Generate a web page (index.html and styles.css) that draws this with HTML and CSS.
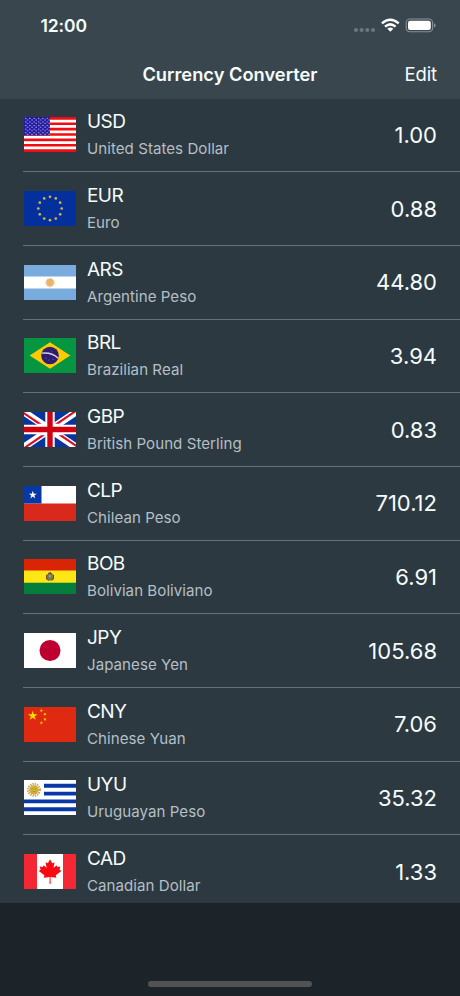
FILE: index.html
```html
<!DOCTYPE html>
<html lang="en">
<head>
<meta charset="utf-8">
<meta name="viewport" content="width=device-width">
<title>Currency Converter</title>
<link rel="stylesheet" href="styles.css">
</head>
<body>
<svg class="defs" aria-hidden="true">
  <defs>
    <polygon id="star" points="0,-1 .225,-.309 .951,-.309 .363,.118 .588,.809 0,.382 -.588,.809 -.363,.118 -.951,-.309 -.225,-.309"/>
    <pattern id="canton" width="4.34" height="3.6" patternUnits="userSpaceOnUse">
      <circle cx="1.6" cy="1.3" r=".65" fill="#d3cff8"/>
      <circle cx="3.6" cy="2.9" r=".65" fill="#d3cff8"/>
    </pattern>
  </defs>
</svg>
<div class="screen">
  <header class="top">
    <div class="status">
      <span class="time">12:00</span>
      <svg class="indicators" viewBox="0 0 84 16">
        <g fill="#6b767d"><circle cx="3" cy="12" r="2.1"/><circle cx="8.6" cy="12" r="2.1"/><circle cx="14.3" cy="12" r="2.1"/><circle cx="20" cy="12" r="2.1"/></g>
        <g fill="none" stroke="#fff" stroke-width="2.5"><path d="M28.9 5.4Q37.3-2 45.7 5.4"/><path d="M32 8.6Q37.3 4.1 42.6 8.6"/></g>
        <path d="M34.3 10.8Q37.3 8.4 40.3 10.8L37.3 13.8Z" fill="#fff"/>
        <rect x="53.2" y="1" width="26.4" height="12.8" rx="3.7" fill="none" stroke="#87939a" stroke-width="1.1"/>
        <rect x="55" y="2.8" width="22.8" height="9.2" rx="2.1" fill="#fff"/>
        <path d="M81 5.2Q82.6 5.8 82.6 7.4T81 9.6Z" fill="#87939a"/>
      </svg>
    </div>
    <nav class="nav"><h1>Currency Converter</h1><a class="edit">Edit</a></nav>
  </header>
  <main class="list">
    <div class="row">
      <svg class="flag" viewBox="0 0 52 35"><path fill="#fff" d="M0 0h52v35H0z"/><path stroke="#f10b12" stroke-width="2.69" d="M0 1.35h52M0 6.73h52M0 12.12h52M0 17.5h52M0 22.88h52M0 28.27h52M0 33.65h52"/><path fill="#2018a0" d="M0 0h26v18.4H0z"/><path fill="url(#canton)" d="M0 0h26v18H0z"/></svg>
      <div class="info"><div class="code">USD</div><div class="name">United States Dollar</div></div><div class="value">1.00</div>
    </div>
    <div class="row">
      <svg class="flag" viewBox="0 0 52 35"><path fill="#03309c" d="M0 0h52v35H0z"/><g fill="#cdb44b"><circle cx="26" cy="5.8" r="1.35"/><circle cx="31.8" cy="7.4" r="1.35"/><circle cx="36.2" cy="11.7" r="1.35"/><circle cx="37.7" cy="17.5" r="1.35"/><circle cx="36.2" cy="23.3" r="1.35"/><circle cx="31.8" cy="27.6" r="1.35"/><circle cx="26" cy="29.2" r="1.35"/><circle cx="20.2" cy="27.6" r="1.35"/><circle cx="15.8" cy="23.3" r="1.35"/><circle cx="14.3" cy="17.5" r="1.35"/><circle cx="15.8" cy="11.7" r="1.35"/><circle cx="20.2" cy="7.4" r="1.35"/></g></svg>
      <div class="info"><div class="code">EUR</div><div class="name">Euro</div></div><div class="value">0.88</div>
    </div>
    <div class="row">
      <svg class="flag" viewBox="0 0 52 35"><path fill="#79abdc" d="M0 0h52v35H0z"/><path fill="#fff" d="M0 11.6h52v12H0z"/><circle cx="26" cy="17.6" r="3.8" fill="#e9b36c"/><circle cx="26" cy="17.6" r="4.3" fill="none" stroke="#e9b777" stroke-width="1" stroke-dasharray=".9 .8"/></svg>
      <div class="info"><div class="code">ARS</div><div class="name">Argentine Peso</div></div><div class="value">44.80</div>
    </div>
    <div class="row">
      <svg class="flag" viewBox="0 0 52 35"><path fill="#069642" d="M0 0h52v35H0z"/><path fill="#fecb00" d="M26 4.3 46.3 17.5 26 30.7 5.7 17.5Z"/><circle cx="26" cy="17.5" r="8.8" fill="#2d1c70"/><path d="M17.7 15.2Q27.5 14 34.2 20.2" fill="none" stroke="#d4d3e4" stroke-width="1.3"/><g fill="#8d85b5"><circle cx="22" cy="20" r=".5"/><circle cx="25" cy="22" r=".5"/><circle cx="29" cy="21.5" r=".5"/><circle cx="28" cy="13.5" r=".4"/></g></svg>
      <div class="info"><div class="code">BRL</div><div class="name">Brazilian Real</div></div><div class="value">3.94</div>
    </div>
    <div class="row">
      <svg class="flag" viewBox="0 0 52 35"><path fill="#0635a0" d="M0 0h52v35H0z"/><path stroke="#fff" stroke-width="7" d="M0 0 52 35M52 0 0 35"/><path fill="#d80d20" d="M0 0 17.5 11.7h-4L0 2.6ZM52 0h-3.6L31 11.7h4ZM52 35 34.5 23.3h4L52 32.4ZM0 35h3.6L21 23.3h-4Z"/><path stroke="#fff" stroke-width="9.4" d="M26 0v35M0 17.5h52"/><path stroke="#d00013" stroke-width="5.4" d="M26 0v35M0 17.5h52"/></svg>
      <div class="info"><div class="code">GBP</div><div class="name">British Pound Sterling</div></div><div class="value">0.83</div>
    </div>
    <div class="row">
      <svg class="flag" viewBox="0 0 52 35"><path fill="#fff" d="M0 0h52v35H0z"/><path fill="#d9291c" d="M0 17.5h52V35H0z"/><path fill="#0738a6" d="M0 0h17.5v17.5H0z"/><use href="#star" transform="translate(8.8 9) scale(4.2)" fill="#fff"/></svg>
      <div class="info"><div class="code">CLP</div><div class="name">Chilean Peso</div></div><div class="value">710.12</div>
    </div>
    <div class="row">
      <svg class="flag" viewBox="0 0 52 35"><path fill="#fde613" d="M0 0h52v35H0z"/><path fill="#d92506" d="M0 0h52v11.5H0z"/><path fill="#057d3b" d="M0 23.7h52V35H0z"/><path fill="#9a753b" d="M22 16 24.5 14.5 26 12.6 28 14.5 30 16 29.7 20.3 28 21.4H24L22.2 20Z"/><circle cx="26" cy="17.6" r="2.3" fill="#578c68"/><path fill="none" stroke="#773d25" d="M22.7 16v4l2 1.2M29.4 16v4l-2 1.2M24 14.4h3.5"/><circle cx="26" cy="17.2" r=".9" fill="#b9b263"/></svg>
      <div class="info"><div class="code">BOB</div><div class="name">Bolivian Boliviano</div></div><div class="value">6.91</div>
    </div>
    <div class="row">
      <svg class="flag" viewBox="0 0 52 35"><path fill="#fff" d="M0 0h52v35H0z"/><circle cx="26" cy="17.5" r="10.5" fill="#bd0030"/></svg>
      <div class="info"><div class="code">JPY</div><div class="name">Japanese Yen</div></div><div class="value">105.68</div>
    </div>
    <div class="row">
      <svg class="flag" viewBox="0 0 52 35"><path fill="#df2910" d="M0 0h52v35H0z"/><g fill="#ffdc00"><use href="#star" transform="translate(8.7 8.8) scale(5)"/><use href="#star" transform="translate(17.4 3.6) rotate(20) scale(1.8)"/><use href="#star" transform="translate(20.9 7.1) rotate(40) scale(1.8)"/><use href="#star" transform="translate(20.9 12.2) scale(1.8)"/><use href="#star" transform="translate(17.4 15.8) rotate(20) scale(1.8)"/></g></svg>
      <div class="info"><div class="code">CNY</div><div class="name">Chinese Yuan</div></div><div class="value">7.06</div>
    </div>
    <div class="row">
      <svg class="flag" viewBox="0 0 52 35"><path fill="#fff" d="M0 0h52v35H0z"/><path stroke="#0738a6" stroke-width="3.9" d="M20 5.8h32M20 13.6h32M0 21.4h52M0 29.2h52"/><circle cx="10" cy="9.8" r="5.4" fill="none" stroke="#c7a657" stroke-width="3.2" stroke-dasharray="1.2 .92"/><circle cx="10" cy="9.8" r="4.4" fill="#d2ae32"/><path d="M8 8.7h1.2M10.9 8.7h1.2M8.5 11.6h3" stroke="#a4852d" stroke-width=".6"/></svg>
      <div class="info"><div class="code">UYU</div><div class="name">Uruguayan Peso</div></div><div class="value">35.32</div>
    </div>
    <div class="row">
      <svg class="flag" viewBox="0 0 52 35"><path fill="#fff" d="M0 0h52v35H0z"/><path fill="#f52735" d="M0 0h13v35H0zM39 0h13v35H39z"/><path fill="#fa0a10" d="M26 5.2 28.2 9.2 30.5 8.2 29.5 14 32.5 11.3 33.3 13 36.3 12.4 35.5 15.7 37.4 17 31.8 21.3 32.4 23.7 26.5 23.1 26.7 29.7H25.5L25.7 23.1 19.8 23.7 20.4 21.3 14.8 17 16.6 15.7 15.7 12.4 18.9 13 19.6 11.3 22.6 14 21.6 8.2 23.9 9.2Z"/></svg>
      <div class="info"><div class="code">CAD</div><div class="name">Canadian Dollar</div></div><div class="value">1.33</div>
    </div>
  </main>
  <footer class="bottom"><div class="home"></div></footer>
</div>
</body>
</html>
```
FILE: styles.css
```css
* { box-sizing: border-box; }
body { margin: 0; background: #1c242a; color: #f5fdff; font-family: Inter, "Liberation Sans", sans-serif; }
.defs { position: absolute; width: 0; height: 0; }
.screen { width: 460px; height: 996px; display: flex; flex-direction: column; overflow: hidden; }
.top { height: 98.5px; flex: none; background: #3a464e; border-bottom: 1px solid #37434b; }
.status { height: 49px; display: flex; justify-content: space-between; align-items: flex-start; padding: 0 23px 0 40.5px; }
.time { font-size: 17.5px; line-height: 22px; font-weight: 600; margin-top: 15px; letter-spacing: -.1px; }
.indicators { width: 84px; height: 16px; margin-top: 18px; }
.nav { height: 49px; display: grid; grid-template-columns: 1fr auto 1fr; align-items: center; padding: 0 23px; }
h1 { grid-column: 2; margin: 0; font-size: 18.3px; line-height: 24px; font-weight: 600; }
.edit { justify-self: end; font-size: 18.5px; line-height: 24px; letter-spacing: -.1px; }
.list { height: 804px; flex: none; overflow: hidden; background: #2d3941; }
.row { height: 73.68px; margin-left: 23px; padding: 0 23px 0 1px; display: flex; align-items: center; border-bottom: 1px solid #66737a; }
.flag { width: 52px; height: 35px; flex: none; }
.info { margin-left: 11px; flex: 1; }
.code { font-size: 19px; line-height: 24px; letter-spacing: -.55px; }
.name { font-size: 15.1px; line-height: 20px; margin-top: 5px; letter-spacing: .04px; color: #b4bfc5; }
.value { font-size: 22px; line-height: 28px; }
.bottom { flex: 1; display: flex; justify-content: center; align-items: flex-end; padding-bottom: 9px; }
.home { width: 164px; height: 6px; border-radius: 3px; background: #515253; }
```
